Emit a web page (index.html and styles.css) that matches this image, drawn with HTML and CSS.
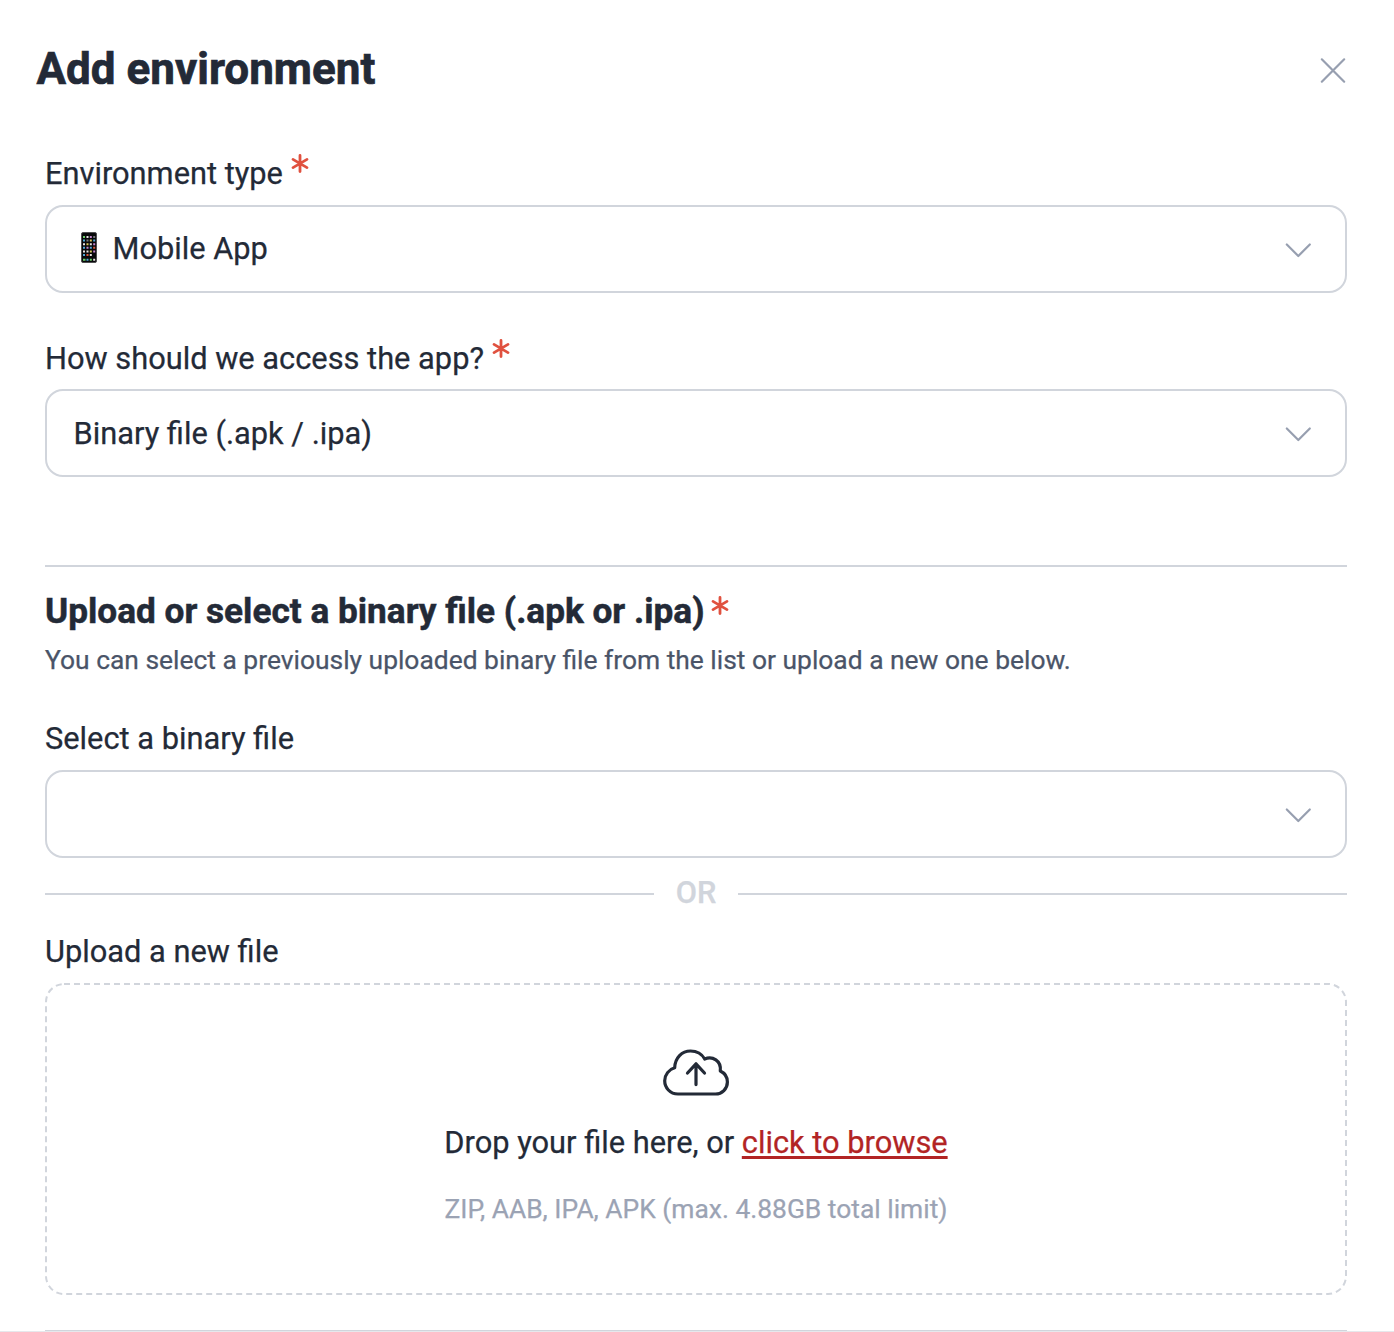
FILE: index.html
```html
<!DOCTYPE html>
<html lang="en">
<head>
  <meta charset="UTF-8">
  <title>Add environment</title>
  <meta name="viewport" content="width=device-width, initial-scale=1.0">
  <link rel="stylesheet" href="styles.css">
</head>
<body>
  <div class="modal">
    <div class="modal-header">
      <h1>Add environment</h1>
      <button class="close" aria-label="Close">
        <svg width="28" height="28" viewBox="0 0 28 28"><path d="M2.8 2.3L25.2 24.7M25.2 2.3L2.8 24.7"/></svg>
      </button>
    </div>

    <div class="modal-body">
      <div class="field type-field">
        <div class="label">Environment type
          <svg class="required" width="18" height="20" viewBox="0 0 18 20"><path d="M9 2.5V18.5M2 6.4L16 14.6M16 6.4L2 14.6"/></svg>
        </div>
        <div class="select">
          <svg class="phone" width="16" height="31" viewBox="0 0 16 31">
            <rect class="phone-case" x="0.5" y="0.5" width="15" height="30" rx="1.5"/>
            <g class="phone-apps">
              <path class="green" d="M2 5h2M2 27.8h2.5M8.8 27.8h2"/>
              <path class="white" d="M5.5 5h2M2 12.2h2M5.5 19.4h2M2 19.4h2M8.8 12.2h2M12.2 27.8h2M8.8 23h2"/>
              <path class="pink" d="M8.8 5h2M12.2 12.2h2M5.5 15.8h2M12.2 19.4h2"/>
              <path class="blue" d="M2 8.6h2M12.2 8.6h2M2 15.8h2M8.8 15.8h2M5.5 27.8h2M2 23h2"/>
              <path class="yellow" d="M8.8 8.6h2M5.5 12.2h2M8.8 19.4h2"/>
              <path class="red" d="M12.2 15.8h2M5.5 23h2"/>
              <path class="gray" d="M12.2 5h2M5.5 8.6h2"/>
            </g>
          </svg>
          <span>Mobile App</span>
          <svg class="chevron" width="28" height="16" viewBox="0 0 28 16"><path d="M2.8 2.5L14.3 14L25.8 2.5"/></svg>
        </div>
      </div>

      <div class="field access-field">
        <div class="label">How should we access the app?
          <svg class="required" width="18" height="20" viewBox="0 0 18 20"><path d="M9 2.5V18.5M2 6.4L16 14.6M16 6.4L2 14.6"/></svg>
        </div>
        <div class="select">
          <span>Binary file (.apk / .ipa)</span>
          <svg class="chevron" width="28" height="16" viewBox="0 0 28 16"><path d="M2.8 2.5L14.3 14L25.8 2.5"/></svg>
        </div>
      </div>

      <div class="binary-section">
        <h2>Upload or select a binary file (.apk or .ipa)<svg class="required" width="18" height="20" viewBox="0 0 18 20"><path d="M9 2.5V18.5M2 6.4L16 14.6M16 6.4L2 14.6"/></svg></h2>
        <p class="hint">You can select a previously uploaded binary file from the list or upload a new one below.</p>

        <div class="field">
          <div class="label">Select a binary file</div>
          <div class="select">
            <svg class="chevron" width="28" height="16" viewBox="0 0 28 16"><path d="M2.8 2.5L14.3 14L25.8 2.5"/></svg>
          </div>
        </div>

        <div class="or"><span>OR</span></div>

        <div class="field">
          <div class="label">Upload a new file</div>
          <div class="dropzone">
            <svg class="outline" width="1302" height="312"><rect x="1" y="1" width="1300" height="310" rx="18"/></svg>
            <svg class="cloud" width="68" height="48" viewBox="662 1048 68 48">
              <path d="M678 1094C670 1094 664.7 1087.7 664.7 1080.8C664.7 1074.7 669 1069.4 674.7 1067.8C675 1057.7 682 1051 690.5 1051C696.700 1051 702 1054.200 704.7 1059C712.5 1055.700 721.5 1060.700 720.3 1071C725 1073.200 727.4 1077.200 727.4 1082C727.4 1088.700 722 1094 715.5 1094Z"/>
              <path d="M696 1084.6V1064.300M687.5 1073L696 1063.800L704.5 1073"/>
            </svg>
            <p class="drop-text">Drop your file here, or <a href="#">click to browse</a></p>
            <p class="limits">ZIP, AAB, IPA, APK (max. 4.88GB total limit)</p>
          </div>
        </div>
      </div>
      <hr>
    </div>
    <div class="modal-footer"></div>
  </div>
</body>
</html>
```

FILE: styles.css
```css
* {
  box-sizing: border-box;
}

body {
  margin: 0;
  font-family: Roboto, sans-serif;
  font-size: 30.8px;
  line-height: 40px;
  color: #232a37;
  background: #fff;
  -webkit-text-stroke: 0.25px;
}

h1, h2, p {
  margin: 0;
}

svg {
  display: block;
  fill: none;
  flex-shrink: 0;
}

.modal {
  height: 1332px;
  overflow: hidden;
}

.modal-header {
  display: flex;
  justify-content: space-between;
  align-items: center;
  height: 140px;
  padding: 0 47px 0 36.5px;
}

h1 {
  padding-bottom: 2px;
  font-size: 44px;
  line-height: 56px;
  font-weight: 700;
  -webkit-text-stroke: 0.7px;
}

.close {
  margin-top: 1px;
  padding: 0;
  border: none;
  background: none;
  cursor: pointer;
}

.close svg, .chevron {
  stroke: #979fb0;
  stroke-width: 2.2;
  stroke-linecap: round;
  stroke-linejoin: round;
}

.modal-body {
  padding: 13px 47px 0 45px;
}

.label {
  display: flex;
  height: 52px;
  padding-top: 1px;
  white-space: nowrap;
}

.required {
  margin: -1px 0 0 8px;
  stroke: #e0513f;
  stroke-width: 2.8;
  stroke-linecap: round;
}

.select {
  display: flex;
  align-items: center;
  height: 88px;
  padding: 0 33px 0 26.5px;
  border: 2px solid #d1d5dc;
  border-radius: 18px;
}

.chevron {
  margin-left: auto;
  margin-top: 1px;
}

.phone {
  margin: -3px 15.5px 0 7.5px;
}

.phone-case {
  fill: #08080a;
  stroke: #4e4e50;
}

.phone-apps {
  stroke-width: 2;
}

.green { stroke: #6bcf68; }
.white { stroke: #e8e4e4; }
.pink { stroke: #c586cf; }
.blue { stroke: #4fa8d8; }
.yellow { stroke: #dccb58; }
.red { stroke: #d9573d; }
.gray { stroke: #77777c; }

.access-field {
  margin-top: 44px;
}

.access-field .label {
  padding-top: 2px;
}

.access-field .select {
  padding-top: 2px;
}

.access-field .chevron {
  margin-top: 0;
}

.binary-section {
  margin-top: 88px;
  border-top: 2px solid #d1d5dc;
}

h2 {
  display: flex;
  padding-top: 24px;
  font-size: 35.2px;
  line-height: 40px;
  font-weight: 700;
  -webkit-text-stroke: 0.5px;
}

h2 .required {
  margin: 4px 0 0 6px;
}

.hint {
  margin: 11px 0 40px;
  font-size: 26.4px;
  line-height: 36px;
  color: #4a5468;
}

.or {
  display: flex;
  align-items: center;
  gap: 22px;
  height: 36px;
  margin: 18px 0 19px;
  color: #d1d5dc;
  font-weight: 500;
}

.or span {
  padding-bottom: 2px;
}

.or::before, .or::after {
  content: "";
  flex: 1;
  height: 2px;
  background: #d1d5dc;
}

.dropzone {
  display: grid;
  justify-items: center;
  align-content: start;
  height: 312px;
  text-align: center;
}

.outline, .cloud {
  grid-area: 1 / 1;
}

.outline {
  height: 312px;
  margin-bottom: -312px;
  stroke: #d1d5dc;
  stroke-width: 2;
  stroke-dasharray: 6 4;
}

.cloud {
  margin-top: 65px;
  stroke: #232a37;
  stroke-width: 3.2;
  stroke-linecap: round;
  stroke-linejoin: round;
}

.drop-text {
  margin-top: 27px;
}

.drop-text a {
  color: #b22424;
  text-decoration-thickness: 3px;
  text-underline-offset: 3px;
}

.limits {
  margin-top: 28px;
  font-size: 26.4px;
  line-height: 36px;
  color: #9ba3b4;
}

hr {
  height: 1px;
  margin: 35px 0 0;
  border: none;
  background: #d1d5dc;
}

.modal-footer {
  border-top: 1px solid #e6e8ec;
}
```
